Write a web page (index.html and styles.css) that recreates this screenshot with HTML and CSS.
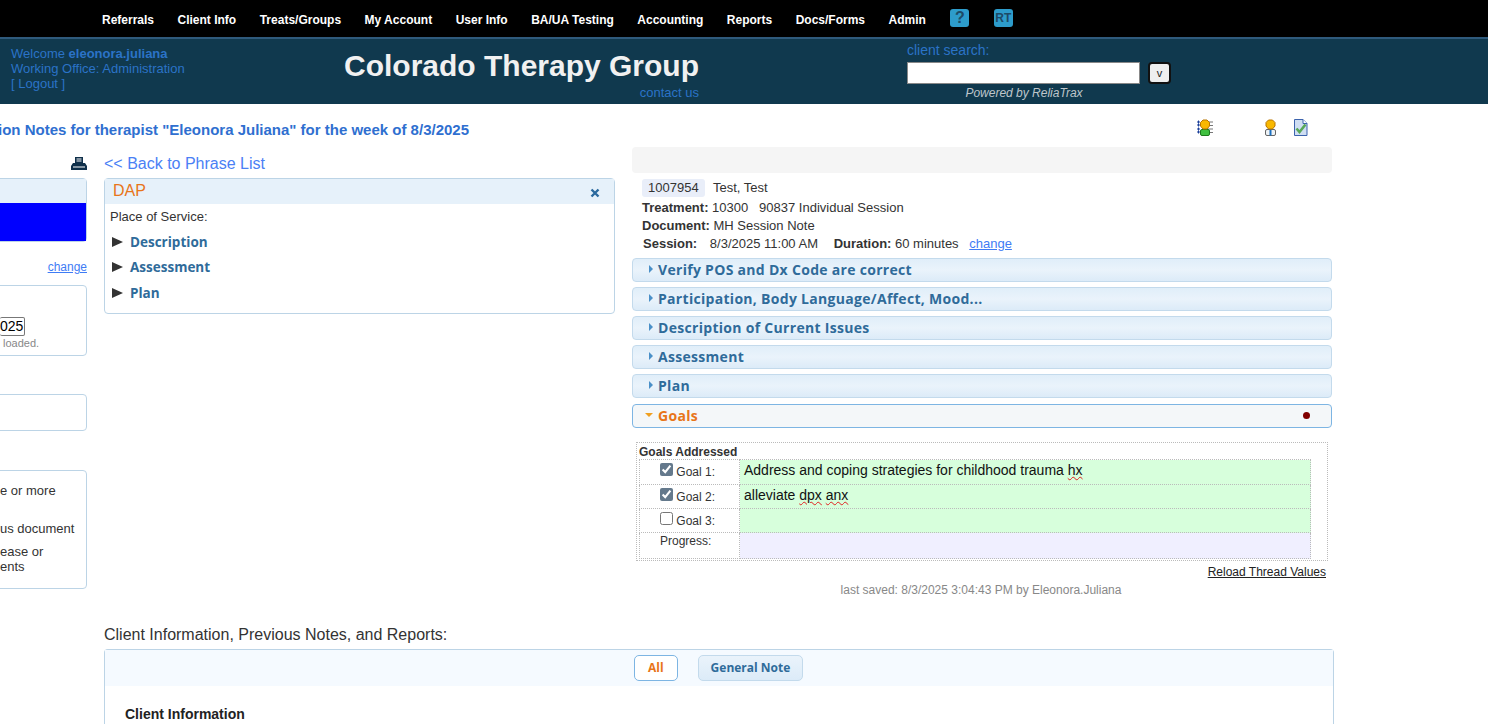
FILE: index.html
```html
<!DOCTYPE html>
<html lang="en">
<head>
    <meta charset="UTF-8">
    <title>Colorado Therapy Group</title>
    <link rel="stylesheet" href="styles.css">
</head>
<body>
    <div class="nav">
        <a>Referrals</a>
        <a>Client Info</a>
        <a>Treats/Groups</a>
        <a>My Account</a>
        <a>User Info</a>
        <a>BA/UA Testing</a>
        <a>Accounting</a>
        <a>Reports</a>
        <a>Docs/Forms</a>
        <a>Admin</a>
        <span class="nav-icon">?</span>
        <span class="nav-icon nav-icon-rt">RT</span>
    </div>
    <div class="header">
        <div class="welcome">
            <div>Welcome <b>eleonora.juliana</b></div>
            <div>Working Office: Administration</div>
            <div>[ Logout ]</div>
        </div>
        <div class="brand">
            <div class="brand-name">Colorado Therapy Group</div>
            <div class="contact">contact us</div>
        </div>
        <div class="search">
            <div class="search-label">client search:</div>
            <div class="search-row">
                <input class="search-input" type="text">
                <button class="search-button">v</button>
            </div>
            <div class="powered">Powered by ReliaTrax</div>
        </div>
    </div>

    <div class="title-row">
        <div class="page-title">ion Notes for therapist "Eleonora Juliana" for the week of 8/3/2025</div>
        <div class="title-icons">
            <svg class="icon-list" width="16" height="17" viewBox="0 0 16 17">
                <path d="M0 3h3M0 6h3M0 10h3M0 13h3M1.500 1.500v3M1.500 4.500v3M1.500 8.500v3M1.500 11.500v3" stroke="#1b3f9a" stroke-width="1" fill="none"/>
                <path d="M11 3h5M11 6.500h5M11 10h5M11 13.500h5" stroke="#777" stroke-width="1"/>
                <rect x="3.500" y="10.500" width="9" height="6" rx="1.500" fill="#3fc03f" stroke="#1c7a1c"/>
                <path d="M6 1h4l2.500 2.500v3.500l-2.500 3h-4l-2.500-3v-3.500z" fill="#f8b800" stroke="#b87400"/>
            </svg>
            <svg class="icon-user" width="13" height="17" viewBox="0 0 13 17">
                <rect x="1.500" y="10.500" width="10" height="6" rx="1.500" fill="#eef2f5" stroke="#666"/>
                <rect x="5.500" y="10.500" width="2" height="6" fill="#1b6fc0"/>
                <path d="M4.500 1h4l2.500 2.500v3.500l-2.500 3h-4l-2.500-3v-3.500z" fill="#f8b800" stroke="#b87400"/>
            </svg>
            <svg class="icon-doc" width="15" height="17" viewBox="0 0 15 17">
                <path d="M1.500 .5h8.500l4 4v12h-12.500z" fill="#cfdef3" stroke="#3c63ad"/>
                <path d="M10 .5v4h4" fill="#fff" stroke="#3c63ad"/>
                <path d="M3.500 9.500l3 3.500 6-7.500" stroke="#58a858" stroke-width="2.600" fill="none"/>
            </svg>
        </div>
    </div>

    <div class="columns">
        <div class="left">
            <div class="print-row">
                <svg width="16" height="14" viewBox="0 0 16 14">
                    <path d="M4 0h8v6h-8z M5.500 1.500v1h5v-1z M5.500 3.500v1h5v-1z" fill="#0f2f4a" fill-rule="evenodd"/>
                    <path d="M2 6h12l2 3v4h-16v-4z" fill="#0f2f4a"/>
                    <rect x="2" y="9.500" width="12" height="1" fill="#fff"/>
                </svg>
            </div>
            <div class="side-box">
                <div class="side-head"></div>
                <div class="side-blue"></div>
            </div>
            <div class="change-row"><a class="link">change</a></div>
            <div class="side-box box-date">
                <div class="date-field">025</div>
                <div class="date-note">loaded.</div>
            </div>
            <div class="side-box box-empty"></div>
            <div class="side-box box-help">
                <div class="help-line">e or more</div>
                <div class="help-line line-doc">us document</div>
                <div class="help-line line-ease">ease or</div>
                <div class="help-line">ents</div>
            </div>
        </div>

        <div class="middle">
            <a class="back-link">&lt;&lt; Back to Phrase List</a>
            <div class="phrase-box">
                <div class="phrase-head">
                    <span>DAP</span>
                    <svg width="10" height="10" viewBox="0 0 10 10"><path d="M1.500 1.500l7 7M8.500 1.500l-7 7" stroke="#2a6a9e" stroke-width="2.400"/></svg>
                </div>
                <div class="phrase-body">
                    <div class="place">Place of Service:</div>
                    <div class="phrase-item"><span class="tri"></span>Description</div>
                    <div class="phrase-item"><span class="tri"></span>Assessment</div>
                    <div class="phrase-item"><span class="tri"></span>Plan</div>
                </div>
            </div>
        </div>

        <div class="right">
            <div class="gray-bar"></div>
            <div class="info">
                <div class="info-client"><span class="client-id">1007954</span> Test, Test</div>
                <div class="info-line"><b>Treatment:</b> 10300 &nbsp; 90837 Individual Session</div>
                <div class="info-line"><b>Document:</b> MH Session Note</div>
                <div class="info-line info-session"><b>Session:</b> <span class="session-date">8/3/2025 11:00 AM</span> <b>Duration:</b> 60 minutes <a class="link change-link">change</a></div>
            </div>
            <div class="acc"><span class="acc-arrow"></span>Verify POS and Dx Code are correct</div>
            <div class="acc"><span class="acc-arrow"></span>Participation, Body Language/Affect, Mood...</div>
            <div class="acc"><span class="acc-arrow"></span>Description of Current Issues</div>
            <div class="acc"><span class="acc-arrow"></span>Assessment</div>
            <div class="acc"><span class="acc-arrow"></span>Plan</div>
            <div class="acc acc-open"><span class="acc-arrow-open"></span>Goals<span class="dot"></span></div>

            <div class="goals">
                <div class="goals-title">Goals Addressed</div>
                <table class="goals-table">
                    <tr class="row-1">
                        <td class="goal-label"><input type="checkbox" checked> Goal 1:</td>
                        <td class="goal-value">Address and coping strategies for childhood trauma <span class="typo">hx</span></td>
                    </tr>
                    <tr class="row-2">
                        <td class="goal-label"><input type="checkbox" checked> Goal 2:</td>
                        <td class="goal-value">alleviate <span class="typo">dpx</span> <span class="typo">anx</span></td>
                    </tr>
                    <tr class="row-3">
                        <td class="goal-label"><input type="checkbox"> Goal 3:</td>
                        <td class="goal-value"></td>
                    </tr>
                    <tr class="row-4">
                        <td class="goal-label progress-label">Progress:</td>
                        <td class="progress-value"></td>
                    </tr>
                </table>
            </div>
            <div class="reload"><a>Reload Thread Values</a></div>
            <div class="saved">last saved: 8/3/2025 3:04:43 PM by Eleonora.Juliana</div>
        </div>
    </div>

    <div class="bottom">
        <div class="bottom-title">Client Information, Previous Notes, and Reports:</div>
        <div class="bottom-box">
            <div class="tabs">
                <span class="tab tab-active">All</span>
                <span class="tab">General Note</span>
            </div>
            <div class="bottom-body">Client Information</div>
        </div>
    </div>
</body>
</html>
```

FILE: styles.css
```css
html, body {
    height: 100%;
    overflow: hidden;
}
body {
    margin: 0;
    font-family: "Liberation Sans", Arial, sans-serif;
    font-size: 13px;
    color: #333;
    background: #fff;
}

/* top bars */
.nav {
    display: flex;
    align-items: flex-start;
    gap: 23.500px;
    height: 37px;
    padding-left: 102px;
    background: #000;
    border-bottom: 2px solid #2f5a7c;
}
.nav a {
    margin-top: 13px;
    color: #fff;
    font-weight: bold;
    font-size: 12px;
    line-height: 15px;
}
.nav-icon {
    width: 19px;
    height: 18px;
    margin: 9px 0 0 1px;
    border-radius: 3px;
    background: #2d9ccb;
    color: #1d4a66;
    font-weight: bold;
    font-size: 16px;
    line-height: 18px;
    text-align: center;
}
.nav-icon-rt {
    font-size: 12px;
}
.header {
    display: flex;
    height: 65px;
    padding-left: 11px;
    background: #10394e;
    color: #2b73c7;
    font-size: 14px;
}
.welcome {
    width: 333px;
    padding-top: 7px;
    font-size: 13px;
    line-height: 15px;
}
.brand {
    width: 355px;
    margin-right: 208px;
    text-align: right;
    white-space: nowrap;
}
.brand-name {
    padding-top: 9px;
    color: #f1f1f1;
    font-weight: bold;
    font-size: 30px;
    line-height: 36px;
}
.contact {
    margin-top: 1px;
    font-size: 13px;
    line-height: 16px;
}
.search {
    width: 264px;
}
.search-label {
    padding-top: 3px;
    line-height: 16px;
}
.search-row {
    display: flex;
    gap: 8px;
    margin-top: 4px;
}
.search-input {
    width: 234px;
    height: 22px;
    box-sizing: border-box;
    margin: 0;
    border: 1px solid #888;
    background: #fff;
}
.search-button {
    width: 23px;
    height: 22px;
    padding: 0;
    border: 2px solid #111;
    border-radius: 4px;
    background: #efefef;
    font-family: "Liberation Sans", Arial, sans-serif;
    font-size: 11px;
    color: #222;
}
.powered {
    width: 234px;
    margin-top: 2px;
    color: #bfc6cb;
    font-style: italic;
    font-size: 12px;
    text-align: center;
}

/* title row */
.title-row {
    display: flex;
    height: 43px;
}
.page-title {
    flex: 1;
    margin-left: -2px;
    padding-top: 18px;
    color: #2f6fd0;
    font-weight: bold;
    font-size: 15px;
    line-height: 16px;
    white-space: nowrap;
}
.title-icons {
    display: flex;
    width: 111px;
    margin-right: 180px;
    padding-top: 15px;
}
.title-icons svg {
    flex: none;
}
.icon-list {
    margin-right: 51px;
}
.icon-user {
    margin-right: 16px;
}

/* columns */
.columns {
    display: grid;
    grid-template-columns: 87px 511px 700px;
    column-gap: 17px;
}
.left {
    overflow: hidden;
}
.print-row {
    display: flex;
    justify-content: flex-end;
    height: 31px;
    padding-top: 10px;
    box-sizing: border-box;
}
.side-box {
    margin-left: -10px;
    border: 1px solid #bcd4e6;
    border-radius: 4px;
    box-sizing: border-box;
}
.side-head {
    height: 24px;
    background: #e6f1fa;
}
.side-blue {
    height: 38px;
    background: #00f;
}
.change-row {
    height: 43px;
    padding-top: 18px;
    box-sizing: border-box;
    font-size: 12px;
    text-align: right;
    line-height: 14px;
}
.link {
    color: #3f7cf5;
    text-decoration: underline;
}
.box-date {
    height: 71px;
    padding: 31px 0 0 9px;
    margin-bottom: 38px;
}
.date-field {
    box-sizing: border-box;
    width: 25px;
    height: 19px;
    border: 1px solid #777;
    border-left: 0;
    border-radius: 2px;
    color: #000;
    font-size: 14px;
    line-height: 17px;
}
.date-note {
    padding: 1px 0 0 3px;
    color: #888;
    font-size: 11px;
    line-height: 13px;
}
.box-empty {
    height: 37px;
    margin-bottom: 39px;
}
.box-help {
    height: 119px;
    padding: 12px 0 0 9px;
}
.help-line {
    line-height: 15px;
    white-space: nowrap;
}
.line-doc { margin-top: 23px; }
.line-ease { margin-top: 8px; }

.middle {
    min-width: 0;
}
.back-link {
    display: block;
    height: 31px;
    color: #4a80f5;
    font-size: 16px;
    line-height: 33px;
}
.phrase-box {
    height: 136px;
    border: 1px solid #bcd4e6;
    border-radius: 4px;
    box-sizing: border-box;
}
.phrase-head {
    display: flex;
    justify-content: space-between;
    align-items: center;
    height: 25px;
    padding: 0 14px 2px 8px;
    box-sizing: border-box;
    background: #e6f1fa;
    color: #e8751a;
    font-size: 16px;
}
.phrase-head svg {
    margin-top: 5px;
}
.phrase-body {
    padding: 5px 5px;
}
.place {
    line-height: 16px;
    margin-bottom: 4px;
}
.phrase-item {
    display: flex;
    align-items: center;
    height: 25.500px;
    color: #2f6b9a;
    font-family: "Open Sans", sans-serif;
    font-weight: bold;
    font-size: 13.500px;
}
.tri {
    width: 0;
    height: 0;
    margin: 0 7px 0 2px;
    border-left: 11px solid #333;
    border-top: 5.500px solid transparent;
    border-bottom: 5.500px solid transparent;
}

/* right column */
.gray-bar {
    height: 26px;
    border-radius: 4px;
    background: #f5f5f5;
}
.info {
    padding: 6px 10px 0;
    height: 85px;
    box-sizing: border-box;
}
.info-client {
    height: 20px;
    line-height: 18px;
}
.client-id {
    display: inline-block;
    padding: 0 6px;
    margin-right: 5px;
    border-radius: 3px;
    background: #e9eef9;
}
.info-line {
    line-height: 18px;
}
.info-session {
    padding-left: 1px;
}
.session-date {
    margin: 0 12px 0 9px;
}
.change-link {
    margin-left: 7px;
}
.acc {
    position: relative;
    display: flex;
    align-items: center;
    height: 24px;
    margin-bottom: 5px;
    box-sizing: border-box;
    padding: 0 0 2px 16px;
    border: 1px solid #c3daec;
    border-radius: 4px;
    background: linear-gradient(#e0eef9, #eaf3fb 50%, #dcebf8);
    color: #2f6b9a;
    font-family: "Open Sans", sans-serif;
    font-weight: bold;
    font-size: 14px;
    letter-spacing: 0.3px;
}
.acc-arrow {
    width: 0;
    height: 0;
    margin-right: 5px;
    border-left: 4px solid #4a90c8;
    border-top: 4px solid transparent;
    border-bottom: 4px solid transparent;
}
.acc-open {
    margin-top: 6px;
    margin-bottom: 14px;
    padding-left: 12px;
    border-color: #7db5e3;
    background: #f4f7f9;
    color: #e8751a;
}
.acc-arrow-open {
    width: 0;
    height: 0;
    margin-right: 5px;
    border-top: 4px solid #f0a020;
    border-left: 4px solid transparent;
    border-right: 4px solid transparent;
}
.dot {
    position: absolute;
    right: 21px;
    top: 7px;
    width: 7px;
    height: 7px;
    border-radius: 50%;
    background: #800000;
}
.goals {
    width: 692px;
    height: 119px;
    margin-left: 4px;
    box-sizing: border-box;
    border: 1px dotted #bbb;
    padding-left: 2px;
    font-size: 12px;
}
.goals-title {
    padding-top: 2px;
    color: #333;
    font-weight: bold;
    line-height: 14px;
}
.goals-table {
    width: 672px;
    border-collapse: collapse;
    table-layout: fixed;
}
.goals-table td {
    padding: 0;
    border: 1px dotted #bbb;
    vertical-align: top;
}
.goal-label {
    width: 100px;
    padding: 3px 0 0 20px !important;
    box-sizing: border-box;
    line-height: 18px;
    white-space: nowrap;
}
.goal-label input {
    width: 13px;
    height: 13px;
    margin: 0;
    vertical-align: 0;
    accent-color: #64798c;
}
.goal-value {
    padding: 2px 4px 0 !important;
    background: #d7ffdc;
    color: #111;
    font-size: 14px;
    line-height: 17px;
}
.progress-value {
    background: #f0efff;
}
.goals-table .progress-label {
    padding-top: 0 !important;
    line-height: 16px;
}
.row-1 { height: 25px; }
.row-2, .row-3 { height: 24px; }
.row-4 { height: 26px; }
.typo {
    text-decoration: underline wavy #e02020 1px;
}
.reload {
    height: 21px;
    padding: 3px 6px 0 0;
    box-sizing: border-box;
    text-align: right;
    color: #222;
    font-size: 12px;
    line-height: 16px;
}
.reload a {
    text-decoration: underline;
}
.saved {
    padding: 1px 2px 0 0;
    color: #888;
    font-size: 12px;
    line-height: 15px;
    text-align: center;
}

/* bottom block */
.bottom {
    width: 1230px;
    margin: 28px 0 0 104px;
}
.bottom-title {
    color: #333;
    font-size: 16px;
    line-height: 18px;
}
.bottom-box {
    height: 75px;
    margin-top: 5px;
    border: 1px solid #bcd4e6;
    border-bottom: 0;
    box-sizing: border-box;
    border-radius: 4px 4px 0 0;
}
.tabs {
    display: flex;
    gap: 20px;
    height: 36px;
    padding: 5px 0 0 529px;
    box-sizing: border-box;
    background: #f5faff;
}
.tab {
    height: 26px;
    padding: 0 12px;
    box-sizing: border-box;
    border: 1px solid #c3daec;
    border-radius: 5px;
    background: linear-gradient(#eaf3fb, #dcebf8);
    color: #2f6b9a;
    font-family: "Open Sans", sans-serif;
    font-weight: bold;
    font-size: 12px;
    line-height: 24px;
}
.tab-active {
    padding: 0 13px;
    border-color: #7db5e3;
    background: #fff;
    color: #e8751a;
}
.bottom-body {
    padding: 20px;
    color: #222;
    font-weight: bold;
    font-size: 14px;
    line-height: 16px;
}
```
